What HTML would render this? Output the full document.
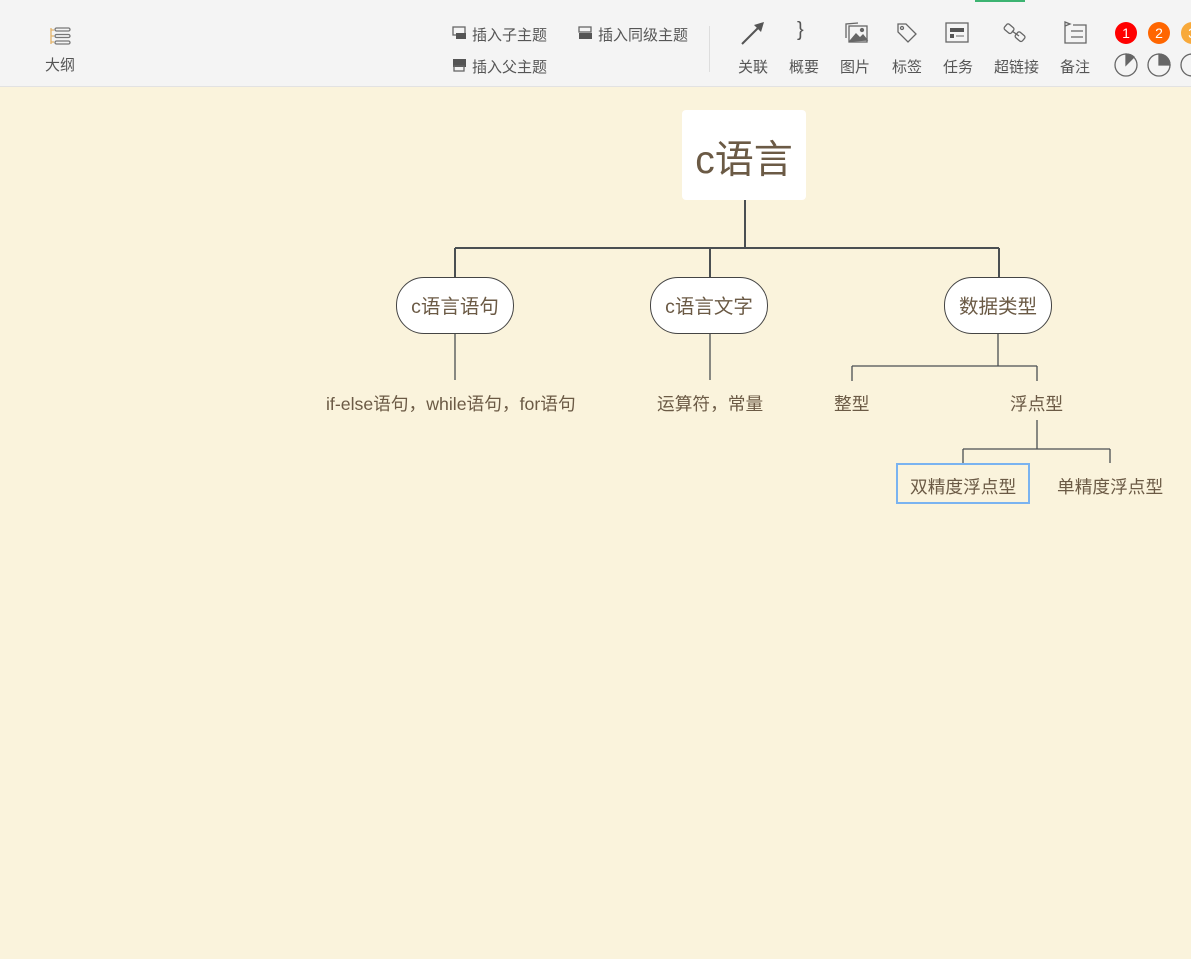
<!DOCTYPE html>
<html><head><meta charset="utf-8"><style>
body{margin:0;width:1191px;height:959px;background:#faf3dc;font-family:"Liberation Sans","Noto Sans CJK SC",sans-serif;position:relative;overflow:hidden;color:#6b5a45}
.tb{position:absolute;left:0;top:0;width:1191px;height:86px;background:#f4f4f4;border-bottom:1px solid #e2e2e2}
.a{position:absolute;white-space:nowrap}
.lbl{font-size:15px;color:#555}
.node{position:absolute;box-sizing:border-box;border:1px solid #444;border-radius:28px;background:#fff;font-size:19.5px;text-align:center;line-height:59px;color:#6b5a45}
.t{position:absolute;font-size:17.7px;white-space:nowrap;color:#6b5a45}
.c{position:absolute;width:22px;height:22px;border-radius:50%;color:#fff;font-size:14px;text-align:center;line-height:22px}
</style></head><body>
<div class="tb">
<div class="a" style="left:975px;top:0;width:50px;height:2px;background:#3cb371"></div>
<svg class="a" style="left:50px;top:25px" width="22" height="22" viewBox="0 0 22 22" fill="none" stroke="#777" stroke-width="1.3"><path d="M1 3v16M1 5h3M1 11h3M1 17h3" stroke="#e3b36a"/><rect x="5" y="3" width="15" height="3" rx="1.5"/><rect x="5" y="9.5" width="15" height="3" rx="1.5"/><rect x="5" y="16" width="15" height="3" rx="1.5"/></svg>
<div class="a lbl" style="left:45px;top:54px">大纲</div>
<svg class="a" style="left:452px;top:26px" width="15" height="14"><rect x="1" y="1" width="12" height="8" fill="none" stroke="#666" stroke-width="1.3"/><rect x="4" y="7" width="10" height="6" fill="#555"/></svg>
<div class="a lbl" style="left:472px;top:24px">插入子主题</div>
<svg class="a" style="left:578px;top:26px" width="15" height="14"><rect x="1" y="1" width="12" height="5" fill="none" stroke="#666" stroke-width="1.3"/><rect x="1" y="7" width="13" height="6" fill="#555"/></svg>
<div class="a lbl" style="left:598px;top:24px">插入同级主题</div>
<svg class="a" style="left:452px;top:58px" width="15" height="14"><rect x="1" y="1" width="13" height="8" fill="#555"/><rect x="2" y="8" width="10" height="5" fill="none" stroke="#666" stroke-width="1.3"/></svg>
<div class="a lbl" style="left:472px;top:56px">插入父主题</div>
<div class="a" style="left:709px;top:26px;width:1px;height:46px;background:#ddd"></div>
<svg class="a" style="left:740px;top:20px" width="26" height="26"><path d="M2 24L21 5" stroke="#555" stroke-width="2"/><path d="M24 2l-3 10-7-7z" fill="#555"/></svg>
<div class="a lbl" style="left:738px;top:56px">关联</div>
<div class="a" style="left:797px;top:19px;font-size:20px;color:#555">}</div>
<div class="a lbl" style="left:789px;top:56px">概要</div>
<svg class="a" style="left:843px;top:21px" width="26" height="24" fill="none" stroke="#666" stroke-width="1.3"><path d="M3 17V3l12-1"/><rect x="6" y="5" width="18" height="16"/><path d="M7 20l6-7 4 4 3-3 4 5z" fill="#666"/><circle cx="19" cy="9" r="1.5" fill="#666"/></svg>
<div class="a lbl" style="left:840px;top:56px">图片</div>
<svg class="a" style="left:896px;top:22px" width="22" height="22" fill="none" stroke="#666" stroke-width="1.3"><path d="M2 2h8l10 10-8 8L2 10z"/><circle cx="6" cy="6" r="1.5"/></svg>
<div class="a lbl" style="left:892px;top:56px">标签</div>
<svg class="a" style="left:945px;top:22px" width="24" height="22"><rect x="1" y="1" width="22" height="19" fill="none" stroke="#666" stroke-width="1.3"/><rect x="5" y="6" width="14" height="4" fill="#555"/><rect x="5" y="12" width="4" height="4" fill="#555"/><path d="M11 14h8" stroke="#666"/></svg>
<div class="a lbl" style="left:943px;top:56px">任务</div>
<svg class="a" style="left:1003px;top:21px" width="26" height="24" fill="none" stroke="#666" stroke-width="1.3"><rect x="2" y="4" width="9" height="7" rx="2" transform="rotate(40 6 7)"/><rect x="13" y="12" width="9" height="7" rx="2" transform="rotate(40 17 15)"/><path d="M9 10l7 5"/></svg>
<div class="a lbl" style="left:994px;top:56px">超链接</div>
<svg class="a" style="left:1062px;top:21px" width="26" height="24" fill="none" stroke="#666" stroke-width="1.3"><path d="M3 9V1l5 2-5 2M3 9v13h21V4H11M9 10h12M9 16h12"/></svg>
<div class="a lbl" style="left:1060px;top:56px">备注</div>
<div class="c" style="left:1115px;top:22px;background:#f00">1</div>
<div class="c" style="left:1148px;top:22px;background:#f60">2</div>
<div class="c" style="left:1181px;top:22px;background:#f8a93a">3</div>
<svg class="a" style="left:1114px;top:53px" width="77" height="25" fill="none" stroke="#666" stroke-width="1.3"><circle cx="12" cy="12" r="11"/><path d="M12 12V1A11 11 0 0 1 20 4z" fill="#666"/><circle cx="45" cy="12" r="11"/><path d="M45 12V1A11 11 0 0 1 56 12z" fill="#666"/><circle cx="78" cy="12" r="11"/></svg>
</div>

<svg class="a" style="left:0;top:0" width="1191" height="959" fill="none" stroke="#4a4f52">
<path d="M745 200V248M455 248H999M455 248V277M710 248V277M999 248V277" stroke-width="2"/>
<path d="M455 334V380M710 334V380M998 334V366M852 366H1037M852 366V381M1037 366V381M1037 420V449M963 449H1110M963 449V463M1110 449V463" stroke-width="1.3"/>
</svg>
<div class="a" style="left:682px;top:110px;width:124px;height:90px;background:#fff;border-radius:4px;font-size:39px;text-align:center;line-height:102px;color:#6b5a45">c语言</div>
<div class="node" style="left:396px;top:277px;width:118px;height:57px">c语言语句</div>
<div class="node" style="left:650px;top:277px;width:118px;height:57px">c语言文字</div>
<div class="node" style="left:944px;top:277px;width:108px;height:57px">数据类型</div>
<div class="t" style="left:326px;top:390px">if-else语句，while语句，for语句</div>
<div class="t" style="left:657px;top:390px">运算符，常量</div>
<div class="t" style="left:834px;top:390px">整型</div>
<div class="t" style="left:1010px;top:390px">浮点型</div>
<div class="a" style="left:896px;top:463px;width:134px;height:41px;box-sizing:border-box;border:2px solid #7ab3f0"></div>
<div class="t" style="left:910px;top:473px">双精度浮点型</div>
<div class="t" style="left:1057px;top:473px">单精度浮点型</div>
</body></html>
